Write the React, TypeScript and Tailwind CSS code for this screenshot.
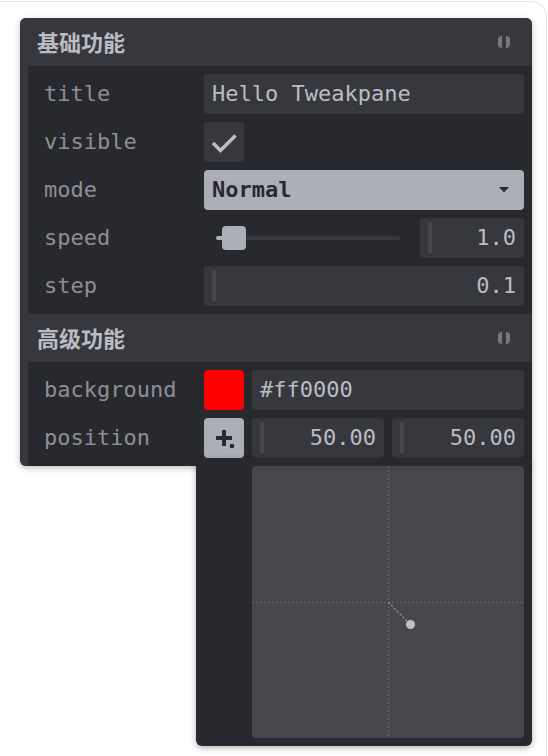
import React from 'react';

const labelCls = 'w-[176px] shrink-0 pl-4 text-[#8e8f95]';

function FolderMark() {
  return (
    <div className="mr-[22px] flex h-3 gap-1 opacity-50">
      <div className="h-3 w-1 rounded-l-[4px] bg-[#bbbcc4]" />
      <div className="h-3 w-1 rounded-r-[4px] bg-[#bbbcc4]" />
    </div>
  );
}

function FolderHeader({ title, top }: { title: string; top?: boolean }) {
  return (
    <div
      className={`flex h-12 items-center justify-between bg-[#37383d] pl-[17px] ${top ? 'rounded-t-md' : ''}`}
    >
      <span className="-mt-0.5 font-['Noto_Sans_CJK_SC',sans-serif] text-[22px] font-bold text-[#bbbcc4]">
        {title}
      </span>
      <FolderMark />
    </div>
  );
}

function Row({ label, children, className = '' }: { label: string; children: React.ReactNode; className?: string }) {
  return (
    <div className={`flex h-10 items-center ${className}`}>
      <div className={labelCls}>{label}</div>
      <div className="flex h-10 flex-1 gap-2">{children}</div>
    </div>
  );
}

function NumberBox({ value, className = '' }: { value: string; className?: string }) {
  return (
    <div className={`flex h-10 items-center rounded-[4px] bg-[#37383d] px-2 ${className}`}>
      <div className="h-8 w-1 shrink-0 rounded-full bg-[#47484e]" />
      <span className="ml-auto text-[#bbbcc4]">{value}</span>
    </div>
  );
}

function Pad() {
  return (
    <svg width="272" height="272" className="block rounded-[4px] bg-[#46474d]">
      <line x1="136.5" y1="0" x2="136.5" y2="272" stroke="#5f6066" strokeWidth="1.5" strokeDasharray="2 2" />
      <line x1="0" y1="136.5" x2="272" y2="136.5" stroke="#5f6066" strokeWidth="1.5" strokeDasharray="2 2" />
      <line x1="136.5" y1="136.5" x2="158.5" y2="158.5" stroke="#8e8f95" strokeWidth="1.5" strokeDasharray="2 2" />
      <circle cx="158.5" cy="158.5" r="4.5" fill="#c0c1c8" />
    </svg>
  );
}

export default function App() {
  return (
    <div className="h-[756px] w-[548px] overflow-hidden bg-white">
      <div className="mt-px h-[800px] w-[547px] rounded-tr-2xl border-r border-t border-[#e5e7eb] pl-5 pt-[16px]">
        <div className="relative w-[512px] rounded-md bg-[#28292e] font-['DejaVu_Sans_Mono','Noto_Sans_CJK_SC',monospace] text-[22px] leading-none shadow-[0_2px_6px_rgba(0,0,0,0.25)]">
          <FolderHeader title="基础功能" top />
          <div className="flex flex-col gap-2 border-l-8 border-[#37383d] bg-[#28292e] py-2 pr-2">
            <Row label="title">
              <div className="flex h-10 flex-1 items-center rounded-[4px] bg-[#37383d] px-2 text-[#bbbcc4]">
                Hello Tweakpane
              </div>
            </Row>
            <Row label="visible">
              <div className="flex h-10 w-10 items-center justify-center rounded-[4px] bg-[#37383d]">
                <svg width="40" height="40" viewBox="0 0 40 40">
                  <path d="M9 21 L16.5 28.5 L31.5 13.5" fill="none" stroke="#bbbcc4" strokeWidth="3.5" />
                </svg>
              </div>
            </Row>
            <Row label="mode">
              <div className="flex h-10 flex-1 items-center justify-between rounded-[4px] bg-[#adafb8] pl-2 pr-[15px]">
                <span className="font-bold text-[#28292e]">Normal</span>
                <svg width="10" height="6" viewBox="0 0 10 6">
                  <path d="M0 0 H10 L5 5.5 Z" fill="#28292e" />
                </svg>
              </div>
            </Row>
            <Row label="speed">
              <div className="flex h-10 flex-1 items-center px-3">
                <div className="flex h-1 flex-1 items-center rounded-full bg-[#37383d]">
                  <div className="h-1 w-[6px] rounded-l-full bg-[#adafb8]" />
                  <div className="h-6 w-6 rounded-[4px] bg-[#adafb8]" />
                </div>
              </div>
              <NumberBox value="1.0" className="w-[104px]" />
            </Row>
            <Row label="step">
              <NumberBox value="0.1" className="flex-1" />
            </Row>
          </div>
          <FolderHeader title="高级功能" />
          <div className="flex flex-col gap-2 rounded-b-md border-l-8 border-[#37383d] bg-[#28292e] py-2 pr-2">
            <Row label="background">
              <div className="h-10 w-10 rounded-[4px] bg-[#ff0000]" />
              <div className="flex h-10 flex-1 items-center rounded-[4px] bg-[#37383d] px-2 text-[#bbbcc4]">
                #ff0000
              </div>
            </Row>
            <Row label="position" className="relative">
              <div className="flex h-10 w-10 items-center justify-center rounded-[4px] bg-[#adafb8]">
                <svg width="40" height="40" viewBox="0 0 40 40">
                  <path d="M12 20 H28 M20 12 V28" stroke="#28292e" strokeWidth="4" />
                  <circle cx="28" cy="28" r="2.3" fill="#28292e" />
                </svg>
              </div>
              <NumberBox value="50.00" className="flex-1" />
              <NumberBox value="50.00" className="flex-1" />
              <div className="absolute left-[168px] top-full z-10 w-[336px] rounded-md bg-[#28292e] pb-2 pl-14 pr-2 pt-2 shadow-[0_2px_6px_rgba(0,0,0,0.3)]">
                <Pad />
              </div>
            </Row>
          </div>
        </div>
      </div>
    </div>
  );
}
